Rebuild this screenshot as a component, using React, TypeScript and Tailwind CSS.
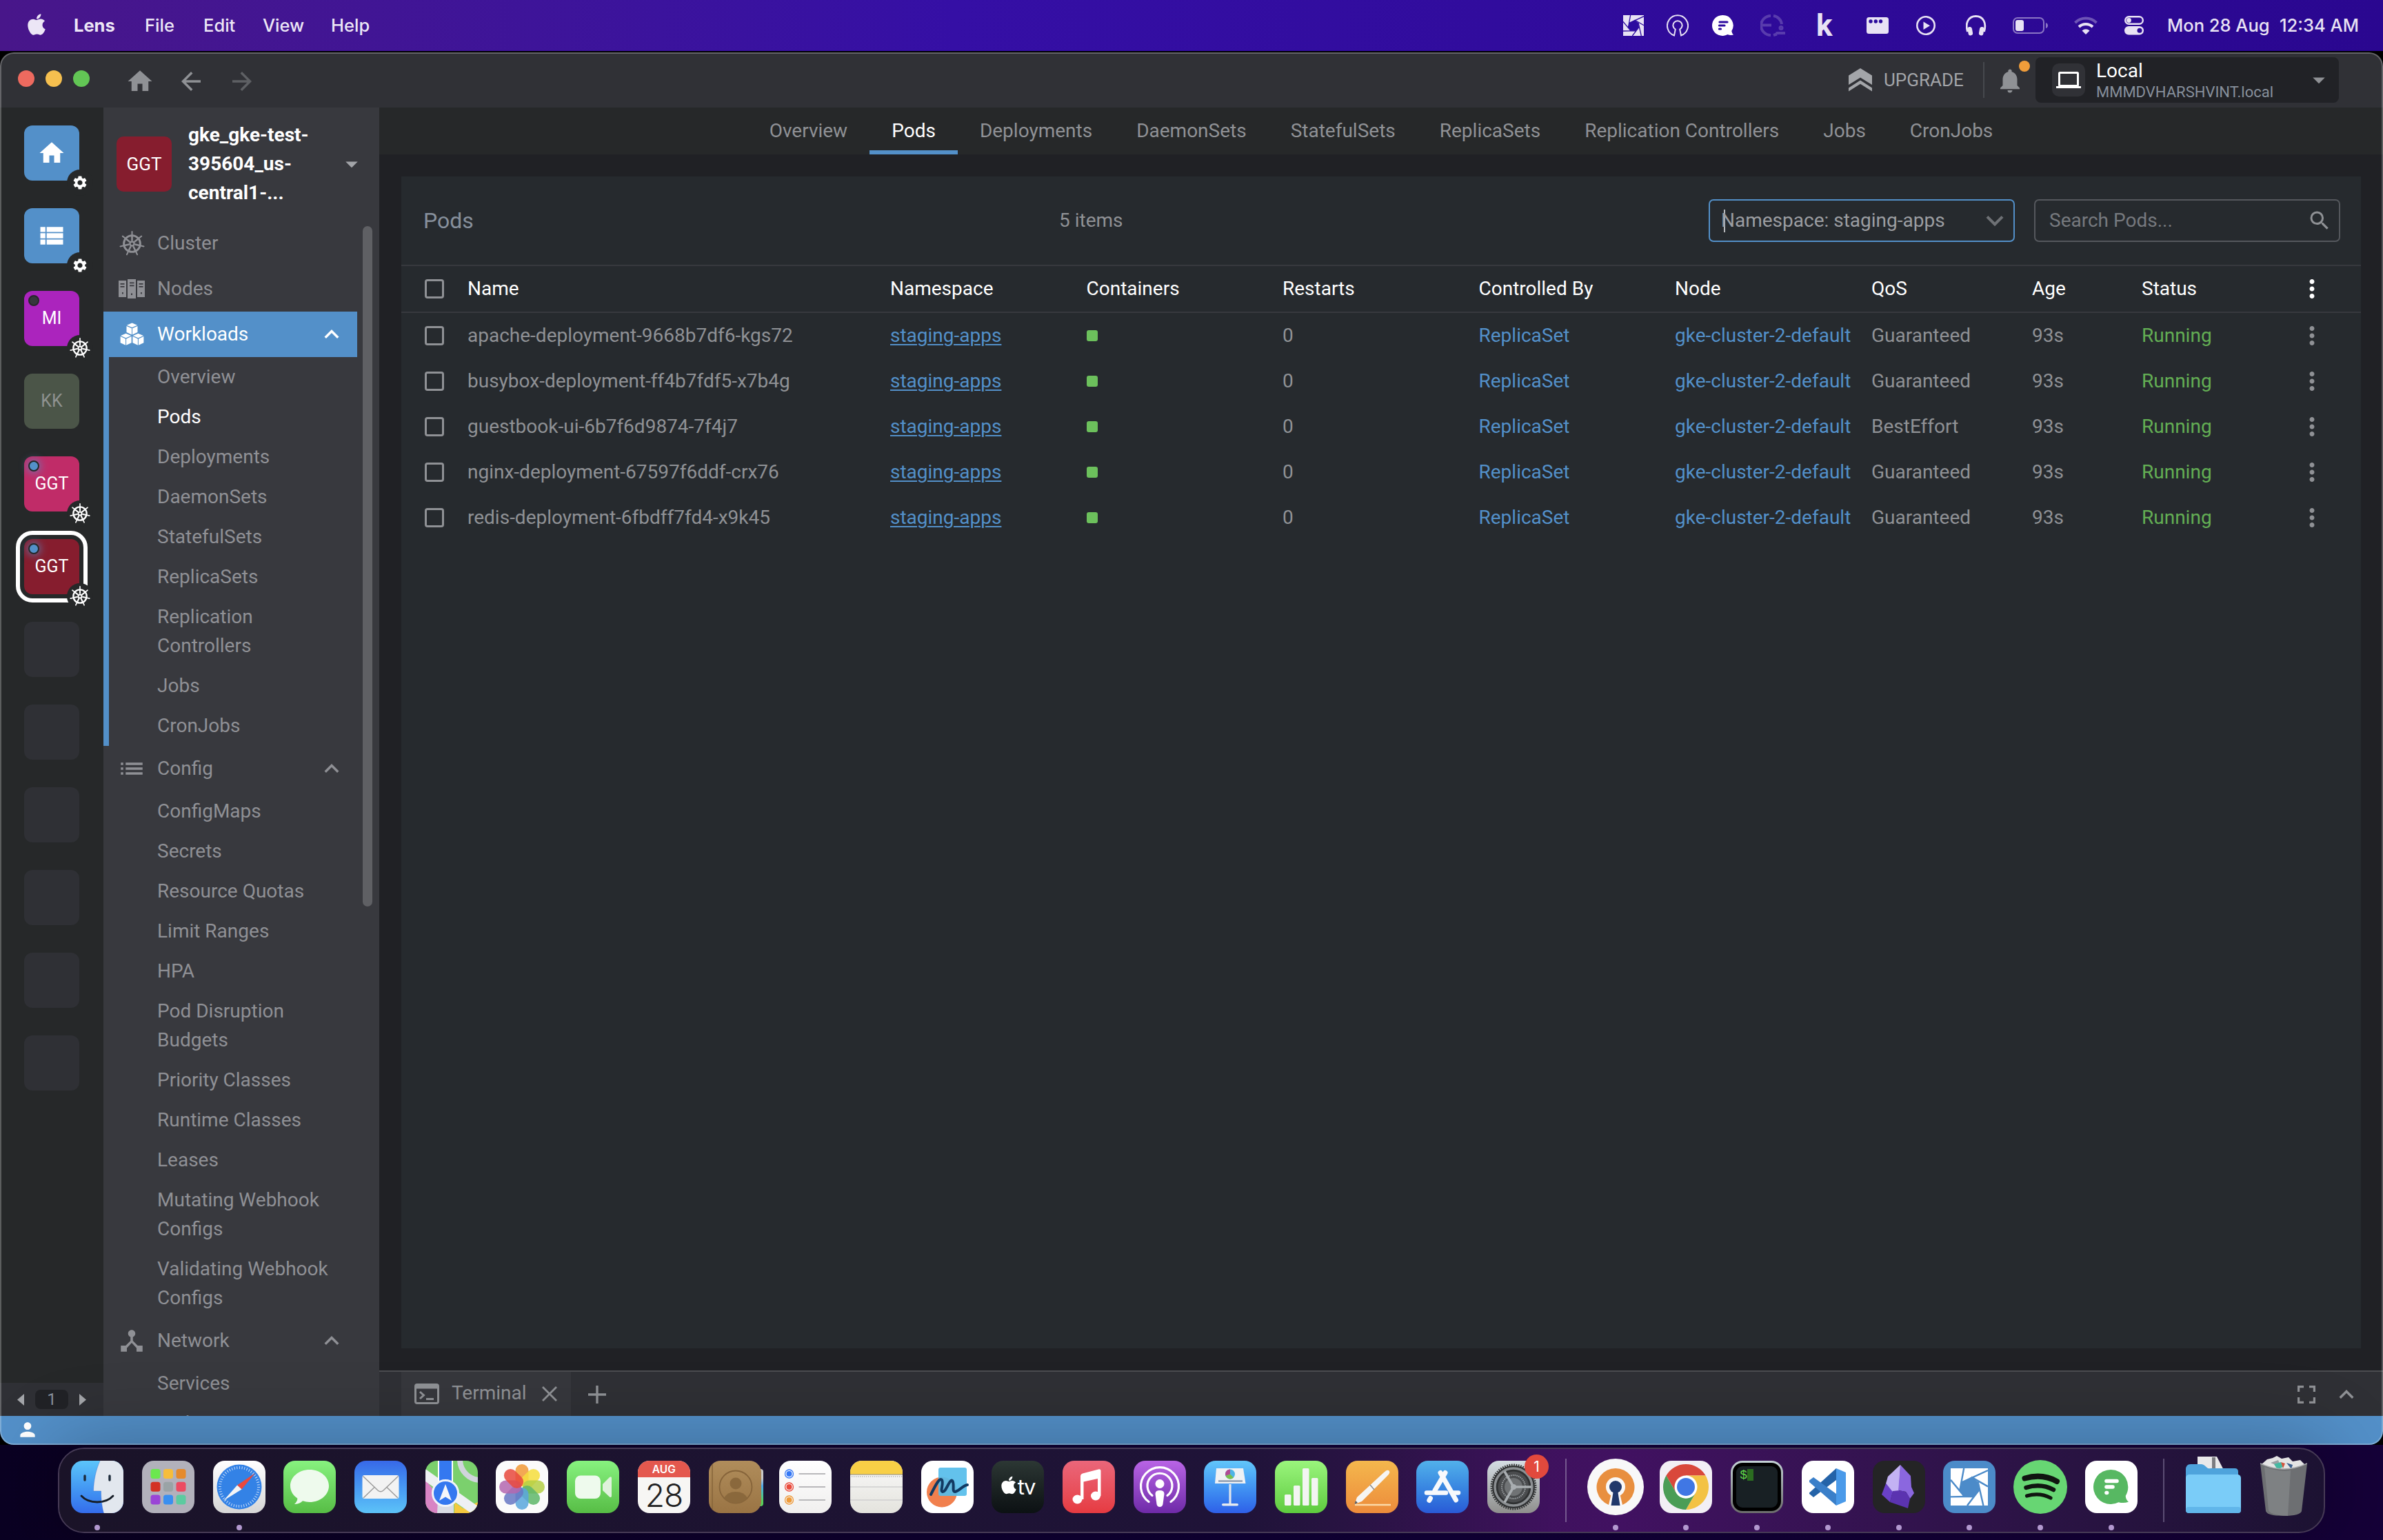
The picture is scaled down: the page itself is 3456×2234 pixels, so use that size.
import React from "react";
import {
  MdArrowBack,
  MdArrowDropDown,
  MdArrowForward,
  MdDeviceHub,
  MdHome,
  MdKeyboardArrowDown,
  MdKeyboardArrowUp,
  MdList,
  MdMoreVert,
  MdNotifications,
  MdPerson,
  MdSearch,
  MdSettings,
  MdViewList,
} from "react-icons/md";
import { FaApple } from "react-icons/fa";

/* ---------- shared marks ---------- */

function Helm({ size, className = "" }: { size: number; className?: string }) {
  const spokes = Array.from({ length: 7 }, (_, i) => {
    const a = (i * 2 * Math.PI) / 7 - Math.PI / 2;
    return { c: Math.cos(a), s: Math.sin(a) };
  });
  return (
    <svg width={size} height={size} viewBox="-18 -18 36 36" className={className} fill="none" stroke="currentColor">
      <circle r="11.6" strokeWidth="2.8" />
      {spokes.map((p, i) => (
        <g key={i}>
          <line x1={p.c * 4} y1={p.s * 4} x2={p.c * 11} y2={p.s * 11} strokeWidth="2.5" />
          <line x1={p.c * 12} y1={p.s * 12} x2={p.c * 17} y2={p.s * 17} strokeWidth="2" strokeLinecap="round" />
        </g>
      ))}
      <circle r="3" strokeWidth="2.4" />
    </svg>
  );
}

function Aperture({ size, cut }: { size: number; cut: string }) {
  return (
    <svg width={size} height={size} viewBox="0 0 90 90" stroke={cut} strokeWidth="4">
      <rect width="90" height="90" fill="currentColor" stroke="none" />
      <polygon points="27,34 50,21 66,33 69,52 56,68 33,68 22,54" fill={cut} stroke="none" />
      <path d="M22 54 32 0M27 34 90 5M50 21 90 44M66 33 79 90M69 52 40 90M56 68 0 69M33 68 0 28" fill="none" />
    </svg>
  );
}

function NodesIcon() {
  return (
    <svg width="38" height="28" viewBox="0 0 38 28" fill="currentColor">
      <path fillRule="evenodd" d="M0 2h11v24H0zM2.5 6v1.8h6V6zm0 4v1.8h6V10zM5 19v2.6h1.8V19z" />
      <path fillRule="evenodd" d="M13 0h12v28H13zM16 4.5v1.8h6.500V4.500zm0 4v1.800h6.500V8.500zM18 20.500v2.600h2v-2.600z" />
      <path fillRule="evenodd" d="M27 2h11v24H27zM29.500 6v1.800h6V6zm0 4v1.800h6V10zM32 19v2.600h1.800V19z" />
    </svg>
  );
}

function CubesIcon() {
  const cube = (x: number, y: number) => (
    <g transform={`translate(${x} ${y})`}>
      <path d="M8 0 15.600 3.200 8 6.600 .4 3.200z" />
      <path d="M0 4.400 7.500 7.700V17L0 13.600z" />
      <path d="M16 4.400 8.500 7.700V17L16 13.600z" />
    </g>
  );
  return (
    <svg width="35" height="34" viewBox="0 0 35 33" fill="currentColor">
      {cube(9.5, 0)}
      {cube(0.6, 15.2)}
      {cube(18.4, 15.2)}
    </svg>
  );
}

/* ---------- menu bar ---------- */

function MenuBar() {
  return (
    <header className="flex h-[74px] shrink-0 items-center bg-linear-to-r from-[#48168a] via-[#350fa5] via-40% to-[#2a0790] pr-[33px] pl-[40px] font-['Inter'] text-[25.500px] font-medium whitespace-pre text-[#ece6f6]">
      <FaApple className="-mt-[4px] mr-[41px] h-[35px] w-[26px]" />
      <div className="flex w-[103px]"><span className="font-bold">Lens</span></div>
      <div className="flex w-[85px]"><span>File</span></div>
      <div className="flex w-[86px]"><span>Edit</span></div>
      <div className="flex w-[99px]"><span>View</span></div>
      <div className="flex grow"><span>Help</span></div>
      <div className="flex items-center text-[#e8e2f4]">
        <div className="flex w-[63px]"><Aperture size={30} cut="#2c0b9f" /></div>
        <div className="flex w-[66px]">
          <svg width="32" height="32" viewBox="0 0 32 32" fill="none" stroke="currentColor" strokeWidth="2">
            <path d="M11 30.500 12.800 21.600A6.600 6.600 0 1 1 19.200 21.600L21 30.500A15 15 0 1 0 11 30.500z" />
          </svg>
        </div>
        <div className="flex w-[70px]">
          <svg width="32" height="32" viewBox="0 0 32 32">
            <path d="M15 1a15 15 0 1 0 7.500 28q4 1.500 8.500.5-2.500-2.500-2.700-5.500A15 15 0 0 0 15 1z" fill="#fff" />
            <path d="M11 11h11M10.500 16h7.500M10.500 21h2" stroke="#2c0b9f" strokeWidth="3.200" strokeLinecap="round" />
          </svg>
        </div>
        <div className="flex w-[82px] opacity-20">
          <svg width="36" height="34" viewBox="0 0 36 34" fill="none" stroke="#fff" strokeWidth="4">
            <path d="M15 3A14 14 0 0 0 15 31M19 3A14 14 0 0 1 31 15M1 16.500H16M19 31l5-1.500" />
            <circle cx="30" cy="20.500" r="2" strokeWidth="3" />
            <path d="M24 28h11" strokeLinecap="round" />
          </svg>
        </div>
        <div className="flex w-[72px]"><span className="-mt-[1px] -ml-[1px] font-['Roboto'] text-[44px] leading-[40px] font-bold">k</span></div>
        <div className="flex w-[72px]">
          <svg width="32" height="24" viewBox="0 0 32 24">
            <rect width="32" height="24" rx="3.500" fill="currentColor" />
            <g fill="#2b0a9c"><circle cx="6" cy="6" r="2.700" /><circle cx="13.300" cy="6" r="2.700" /><circle cx="20.500" cy="6" r="2.700" /></g>
          </svg>
        </div>
        <div className="flex w-[72px]">
          <svg width="28" height="28" viewBox="0 0 28 28">
            <circle cx="14" cy="14" r="12.700" fill="none" stroke="currentColor" strokeWidth="2.600" />
            <path d="M10.500 8.500v11.500l9.500-5.800z" fill="currentColor" />
          </svg>
        </div>
        <div className="flex w-[68px]">
          <svg width="30" height="30" viewBox="0 0 30 30" fill="currentColor">
            <path d="M2.500 24C-1.500 11 4 1.500 14.500 1.500S30.500 11 26.500 24" fill="none" stroke="currentColor" strokeWidth="2.800" />
            <rect x="3" y="17" width="6.500" height="12.500" rx="3" transform="rotate(-10 6 23)" />
            <rect x="19.500" y="17" width="6.500" height="12.500" rx="3" transform="rotate(10 23 23)" />
          </svg>
        </div>
        <div className="flex w-[89px]">
          <svg width="52" height="24" viewBox="0 0 52 24">
            <rect x="1" y="1" width="44" height="22" rx="6" fill="none" stroke="currentColor" strokeWidth="2" opacity=".5" />
            <rect x="4" y="4" width="12" height="16" rx="3" fill="currentColor" />
            <path d="M48 8q3 1 3 4t-3 4z" fill="currentColor" opacity=".5" />
          </svg>
        </div>
        <div className="flex w-[73px]">
          <svg width="34" height="26" viewBox="0 0 34 26" fill="none" stroke="currentColor" strokeWidth="4">
            <path d="M1.500 9a22 22 0 0 1 31 0" opacity=".35" />
            <path d="M7 15a14.500 14.500 0 0 1 20 0" />
            <path d="M11.500 20.500a8 8 0 0 1 11 0L17 26z" fill="currentColor" stroke="none" />
          </svg>
        </div>
        <div className="flex w-[62px]">
          <svg width="28" height="28" viewBox="0 0 28 28">
            <rect x="1.200" y="1.200" width="25.600" height="10.600" rx="5.300" fill="none" stroke="currentColor" strokeWidth="2.400" />
            <circle cx="6.500" cy="6.500" r="3.400" fill="currentColor" />
            <rect y="15" width="28" height="12.500" rx="6.200" fill="currentColor" />
            <circle cx="22" cy="21.200" r="3.500" fill="#2a0896" />
          </svg>
        </div>
        <span className="w-[163px] whitespace-nowrap">Mon 28 Aug</span>
        <span className="w-[117px] whitespace-nowrap">12:34 AM</span>
      </div>
    </header>
  );
}

/* ---------- window title bar ---------- */

function TitleBar() {
  return (
    <div className="flex h-[80px] shrink-0 items-center bg-[#303136] pr-[64px] pl-[26px] text-[#8f9195]">
      <div className="-mt-[4px] flex w-[156px] gap-[16px]">
        <span className="size-[24px] rounded-full bg-[#ed6a5f]" />
        <span className="size-[24px] rounded-full bg-[#f5bf4f]" />
        <span className="size-[24px] rounded-full bg-[#62c655]" />
      </div>
      <div className="mt-[3px] flex grow items-center">
        <MdHome className="size-[42px]" />
        <MdArrowBack className="ml-[32px] size-[42px]" />
        <MdArrowForward className="ml-[32px] size-[42px] text-[#5e6064]" />
      </div>
      <svg width="34" height="34" viewBox="0 0 34 34" fill="#a3a5a9">
        <path d="M17 0 34 10.500V24L17 13.500 0 24V10.500z" />
        <path d="M17 17.500 34 28.500V33.500L17 22.800 0 33.500V28.500z" />
      </svg>
      <span className="ml-[17px] w-[144px] text-[26px] text-[#a3a5a9]">UPGRADE</span>
      <div className="h-[52px] w-[2px] bg-[#46484d]" />
      <div className="relative mt-[2px] mr-[16px] ml-[16px] flex">
        <MdNotifications className="size-[42px]" />
        <span className="absolute top-[-8px] left-[34px] size-[16px] rounded-full bg-[#f09d3a]" />
      </div>
      <div className="flex h-[66px] w-[440px] items-center rounded-[8px] bg-[#212226] pr-[8px] pl-[24px]">
        <div className="flex size-[48px] items-center justify-center rounded-[10px] bg-[#303136]">
          <svg width="36" height="26" viewBox="0 0 36 26">
            <rect x="4.500" y="2.500" width="27" height="19" rx="1" fill="none" stroke="#fff" strokeWidth="3" />
            <rect y="22" width="36" height="3" fill="#fff" />
          </svg>
        </div>
        <div className="ml-[16px] grow">
          <div className="mt-[2px] text-[28px] leading-[34px] text-white">Local</div>
          <div className="text-[22px] leading-[28px] text-[#87909c]">MMMDVHARSHVINT.local</div>
        </div>
        <MdArrowDropDown className="size-[42px]" />
      </div>
    </div>
  );
}

/* ---------- hotbar ---------- */

type Hot = {
  bg: string;
  label?: React.ReactNode;
  badge?: "gear" | "helm";
  dot?: string;
  active?: boolean;
};

const hotItems: Hot[] = [
  { bg: "bg-[#5390c9]", label: <MdHome className="size-[42px]" />, badge: "gear" },
  { bg: "bg-[#5390c9]", label: <MdViewList className="size-[44px]" />, badge: "gear" },
  { bg: "bg-[#ab24bd]", label: "MI", badge: "helm", dot: "bg-[#36373b]" },
  { bg: "bg-[#4b5548]", label: <span className="text-[#8e9290]">KK</span> },
  { bg: "bg-[#c02c68]", label: "GGT", badge: "helm", dot: "bg-[#5390c9] shadow-[0_0_12px_2px_#5390c9aa]" },
  { bg: "bg-[#861d2e]", label: "GGT", badge: "helm", dot: "bg-[#5390c9] shadow-[0_0_12px_2px_#5390c9aa]", active: true },
  ...Array.from({ length: 6 }, () => ({ bg: "bg-[#2f3035]" })),
];

function Hotbar() {
  return (
    <div className="flex w-[150px] shrink-0 flex-col bg-[#262829]">
      <div className="flex grow flex-col gap-[40px] pt-[26px] pl-[35px]">
        {hotItems.map((h, i) => (
          <div key={i} className={`relative flex size-[80px] items-center justify-center rounded-[12px] text-[25px] text-white ${h.bg}`}>
            {h.active && <span className="absolute -inset-[12px] rounded-[24px] border-[6px] border-white" />}
            {h.label}
            {h.dot && <span className={`absolute top-[6px] left-[6px] size-[16px] rounded-full border-2 border-[#262829] ${h.dot}`} />}
            {h.badge && (
              <span className="absolute top-[64px] left-[62px] flex size-[38px] items-center justify-center rounded-full bg-[#262829]">
                {h.badge === "gear" ? <MdSettings className="size-[24px]" /> : <Helm size={30} />}
              </span>
            )}
          </div>
        ))}
      </div>
      <div className="flex h-[48px] shrink-0 items-center bg-[#2f3035] pl-[25px] text-[#a3a5a9]">
        <svg width="10" height="17" viewBox="0 0 10 17" fill="currentColor"><path d="M10 0v17L0 8.500z" /></svg>
        <span className="mx-[16px] flex h-[28px] w-[48px] items-center justify-center rounded-[8px] bg-[#212226] text-[24px] text-[#87909c]">1</span>
        <svg width="10" height="17" viewBox="0 0 10 17" fill="currentColor"><path d="M0 0v17L10 8.500z" /></svg>
      </div>
    </div>
  );
}

/* ---------- sidebar ---------- */

const workloads = ["Overview", "Pods", "Deployments", "DaemonSets", "StatefulSets", "ReplicaSets", "Replication Controllers", "Jobs", "CronJobs"];
const config = [
  "ConfigMaps",
  "Secrets",
  "Resource Quotas",
  "Limit Ranges",
  "HPA",
  "Pod Disruption Budgets",
  "Priority Classes",
  "Runtime Classes",
  "Leases",
  "Mutating Webhook Configs",
  "Validating Webhook Configs",
];
const network = ["Services", "Endpoints"];

function Section({ icon, label, open, active }: { icon: React.ReactNode; label: string; open?: boolean; active?: boolean }) {
  return (
    <div className={`flex h-[66px] w-[368px] items-center pr-[16px] pl-[20px] ${active ? "bg-[#5390c9] text-white" : ""}`}>
      <span className="flex w-[42px] justify-center">{icon}</span>
      <span className="ml-[16px] grow">{label}</span>
      {open && <MdKeyboardArrowUp className="size-[42px]" />}
    </div>
  );
}

function SubList({ items, current, active }: { items: string[]; current?: string; active?: boolean }) {
  return (
    <div className={`border-l-8 ${active ? "border-[#5390c9]" : "border-transparent"}`}>
      {items.map((t) => (
        <div key={t} className={`w-[350px] py-[8px] pr-[20px] pl-[70px] leading-[42px] ${t === current ? "text-white" : ""}`}>{t}</div>
      ))}
    </div>
  );
}

function Sidebar() {
  return (
    <div className="flex w-[400px] shrink-0 flex-col bg-[#38393e] text-[28px] text-[#8f9095]">
      <div className="flex h-[164px] shrink-0 items-center pr-[19px] pl-[19px]">
        <span className="flex size-[80px] shrink-0 items-center justify-center rounded-[10px] bg-[#861d2e] text-[26px] text-white">GGT</span>
        <span className="ml-[24px] grow leading-[42px] font-bold text-white">
          gke_gke-test-
          <br />
          395604_us-
          <br />
          central1-...
        </span>
        <MdArrowDropDown className="size-[42px] shrink-0 text-[#a3a5a9]" />
      </div>
      <div className="relative h-[1734px] overflow-hidden">
        <Section icon={<Helm size={37} className="shrink-0" />} label="Cluster" />
        <Section icon={<NodesIcon />} label="Nodes" />
        <Section icon={<CubesIcon />} label="Workloads" open active />
        <SubList items={workloads} current="Pods" active />
        <Section icon={<MdList className="size-[42px]" />} label="Config" open />
        <SubList items={config} />
        <Section icon={<MdDeviceHub className="size-[42px]" />} label="Network" open />
        <SubList items={network} />
        <span className="absolute top-[8px] right-[10px] h-[987px] w-[14px] rounded-full bg-[#5f6064]" />
      </div>
    </div>
  );
}

/* ---------- pods view ---------- */

const tabs = ["Overview", "Pods", "Deployments", "DaemonSets", "StatefulSets", "ReplicaSets", "Replication Controllers", "Jobs", "CronJobs"];

const pods = [
  ["apache-deployment-9668b7df6-kgs72", "Guaranteed"],
  ["busybox-deployment-ff4b7fdf5-x7b4g", "Guaranteed"],
  ["guestbook-ui-6b7f6d9874-7f4j7", "BestEffort"],
  ["nginx-deployment-67597f6ddf-crx76", "Guaranteed"],
  ["redis-deployment-6fbdff7fd4-x9k45", "Guaranteed"],
];

const rowGrid =
  "grid h-[66px] grid-cols-[62px_613px_284.500px_284.500px_284.500px_284.500px_285px_233px_159px_226px_1fr] items-center pl-[34px]";

function Box() {
  return <span className="size-[28px] rounded-[4px] border-[3px] border-[#8f9195]" />;
}

function Pods() {
  return (
    <div className="flex grow flex-col bg-[#202125] px-[32px] pt-[32px] pb-[32px]">
      <div className="h-[1700px] bg-[#262a2e]">
        <div className="flex h-[128px] items-center pr-[30px] pl-[32px]">
          <span className="w-[922px] text-[32px] text-[#87909c]">Pods</span>
          <span className="grow text-[#8f9195]">5 items</span>
          <div className="flex h-[62px] w-[444px] items-center rounded-[7px] border-2 border-[#5390c9] pl-[20px] text-[#9b9da1]">
            <span className="h-[33px] w-[2px] bg-[#b5b7ba]" />
            <span className="-ml-[6px] grow">Namespace: staging-apps</span>
            <MdKeyboardArrowDown className="mr-[2px] size-[50px] text-[#6e7175]" />
          </div>
          <div className="ml-[28px] flex h-[62px] w-[444px] items-center rounded-[7px] border-2 border-[#55585d] pr-[10px] pl-[20px]">
            <span className="grow text-[#76797e]">Search Pods...</span>
            <MdSearch className="size-[36px] text-[#8f9195]" />
          </div>
        </div>
        <div className={`${rowGrid} box-content border-y-2 border-[#37393e] text-white`}>
          <Box />
          <span>Name</span>
          <span>Namespace</span>
          <span>Containers</span>
          <span>Restarts</span>
          <span>Controlled By</span>
          <span>Node</span>
          <span>QoS</span>
          <span>Age</span>
          <span>Status</span>
          <MdMoreVert className="size-[42px]" />
        </div>
        {pods.map(([name, qos]) => (
          <div key={name} className={rowGrid}>
            <Box />
            <span>{name}</span>
            <span className="text-[#5390c9] underline decoration-2 underline-offset-[3px]">staging-apps</span>
            <span className="size-[16px] rounded-[3px] bg-[#6cc05c]" />
            <span>0</span>
            <span className="text-[#5390c9]">ReplicaSet</span>
            <span className="whitespace-nowrap text-[#5390c9]">gke-cluster-2-default</span>
            <span>{qos}</span>
            <span>93s</span>
            <span className="text-[#63ae54]">Running</span>
            <MdMoreVert className="size-[42px]" />
          </div>
        ))}
      </div>
    </div>
  );
}

function Main() {
  return (
    <div className="flex w-[2906px] shrink-0 flex-col text-[28px] text-[#8f9195]">
      <div className="flex h-[68px] shrink-0 justify-center bg-[#262829]">
        {tabs.map((t) => (
          <div key={t} className={`flex items-center px-[32px] pt-[6px] ${t === "Pods" ? "border-b-[6px] border-[#5390c9] text-white" : "pb-[6px]"}`}>
            {t}
          </div>
        ))}
      </div>
      <Pods />
      <div className="flex h-[66px] shrink-0 items-stretch border-t-2 border-[#4b4c50] bg-[#2f3035] pl-[32px]">
        <div className="flex w-[246px] items-center bg-[#36373c] pl-[19px]">
          <svg width="36" height="30" viewBox="0 0 36 30" fill="none" stroke="currentColor" strokeWidth="3">
            <rect x="1.500" y="1.500" width="33" height="27" rx="2.500" />
            <path d="M1 5H35" strokeWidth="5" />
            <path d="M8 12l5.500 5L8 22M17 22.500h11" />
          </svg>
          <span className="-mt-[3px] ml-[18px] w-[131px]">Terminal</span>
          <svg width="22" height="22" viewBox="0 0 22 22" stroke="currentColor" strokeWidth="2.800"><path d="M1 1 21 21M21 1 1 21" /></svg>
        </div>
        <div className="flex grow items-center pt-[2px] pl-[25px]">
          <svg width="26" height="26" viewBox="0 0 26 26" stroke="currentColor" strokeWidth="3.400"><path d="M13 0V26M0 13H26" /></svg>
        </div>
        <div className="flex items-center pt-[2px] pr-[32px]">
          <svg width="26" height="26" viewBox="0 0 26 26" fill="none" stroke="currentColor" strokeWidth="3.200"><path d="M9 1.600H1.600V9M17 1.600H24.400V9M9 24.400H1.600V17M17 24.400H24.400V17" /></svg>
          <MdKeyboardArrowUp className="ml-[24px] size-[42px]" />
        </div>
      </div>
    </div>
  );
}

/* ---------- dock ---------- */

function Tile({ className = "", children }: { className?: string; children?: React.ReactNode }) {
  return <div className={`relative flex size-[76px] items-center justify-center overflow-hidden rounded-[17px] ${className}`}>{children}</div>;
}

function Art({ children }: { children: React.ReactNode }) {
  return (
    <svg width="76" height="76" viewBox="0 0 76 76" fill="none" className="absolute inset-0">
      {children}
    </svg>
  );
}

function Finder() {
  return (
    <Tile className="bg-linear-to-b from-[#5cc5fa] to-[#356ceb]">
      <Art>
        <path d="M42 0C36 14 33 28 32.500 44H43.500C43.500 56 45 68 47.500 76H76V0z" fill="#e2e7ee" />
        <path d="M20 22v6M56 22v6" stroke="#1c2a3a" strokeWidth="3.400" strokeLinecap="round" />
        <path d="M15 51C26 63 50 63 61 51" stroke="#161d26" strokeWidth="2.800" strokeLinecap="round" />
        <path d="M42 0C36 14 33 28 32.500 44H43.500C43.500 56 45 68 47.500 76" stroke="#2b62c8" strokeOpacity=".35" strokeWidth="1" />
      </Art>
    </Tile>
  );
}

function Launchpad() {
  const colors = ["#6be84e", "#f6bd3b", "#e58a2c", "#d33124", "#9aa3a6", "#ec4b62", "#9a45d6", "#3a8ff0", "#5ccba0"];
  return (
    <Tile className="bg-[#b2b1bb]">
      <Art>
        {colors.map((c, i) => (
          <rect key={c} x={12.500 + (i % 3) * 18.500} y={12 + Math.floor(i / 3) * 18.800} width="14" height="14" rx="3.500" fill={c} />
        ))}
      </Art>
    </Tile>
  );
}

function Safari() {
  return (
    <Tile className="bg-linear-to-b from-white to-[#d6d6d6]">
      <Art>
        <circle cx="38" cy="38" r="32.500" fill="#3382e6" />
        <circle cx="38" cy="38" r="28" stroke="#fff" strokeOpacity=".8" strokeWidth="4" strokeDasharray="0.9 2.760" />
        <path d="M61 18 41.500 41.500 35 35.500z" fill="#e9493d" />
        <path d="M15 58 41.500 41.500 35 35.500z" fill="#f3f4f6" />
      </Art>
    </Tile>
  );
}

function Messages() {
  return (
    <Tile className="bg-linear-to-b from-[#87f27f] to-[#57bd45]">
      <Art>
        <path d="M38 13c-15.500 0-28 10.500-28 23.500 0 7.500 4 13.700 10.300 18 .2 3-1.300 5.800-4.300 8.500 5.500.2 9.500-2 12-4.700A33 33 0 0 0 38 60c15.500 0 28-10.500 28-23.500S53.500 13 38 13z" fill="#eefaed" />
      </Art>
    </Tile>
  );
}

function Mail() {
  return (
    <Tile className="bg-linear-to-b from-[#3868e8] to-[#5dc3f8]">
      <Art>
        <rect x="11.500" y="21" width="53" height="34" rx="3" fill="#f3f3f3" />
        <path d="M12.500 22.500 34 43q4 3.500 8 0L63.500 22.500M13 54 29 38.500M63 54 47 38.500" stroke="#9b9b9b" strokeWidth="1.500" />
      </Art>
    </Tile>
  );
}

function Maps() {
  return (
    <Tile className="bg-[#7bd06d]">
      <Art>
        <path d="M0 28 40 76H0z" fill="#d884c4" />
        <path d="M40 76 76 60V76z" fill="#f4c93f" />
        <path d="M0 12 76 66V76H66L0 30z" fill="#eef0f3" />
        <path d="M19 38H41V76H17z" fill="#d9dce4" />
        <path d="M42 60l22 16H42z" fill="#f4c93f" />
        <rect x="19" y="-2" width="20" height="42" fill="#3478f0" stroke="#fff" strokeWidth="2" />
        <circle cx="80" cy="-2" r="30" stroke="#d0d4dc" strokeWidth="8" />
        <circle cx="29" cy="47" r="18.500" fill="#3478f0" stroke="#f0f3f8" strokeWidth="3" />
        <path d="M29 34 38 58 29 52.500 20 58z" fill="#f5f7fa" />
      </Art>
    </Tile>
  );
}

function Photos() {
  const petals = ["#f19a38", "#f4dd3e", "#b4cf46", "#5fb76a", "#5aa6dc", "#6878c4", "#b368b0", "#e8493e"];
  return (
    <Tile className="bg-[#fbfbfb]">
      <Art>
        {petals.map((c, i) => (
          <rect key={c} x="28.500" y="5" width="19" height="32" rx="9.500" fill={c} fillOpacity=".86" transform={`rotate(${i * 45} 38 38)`} />
        ))}
      </Art>
    </Tile>
  );
}

function FaceTime() {
  return (
    <Tile className="bg-linear-to-b from-[#87f27f] to-[#57bd45]">
      <Art>
        <rect x="12" y="21.500" width="37" height="33.500" rx="8" fill="#eefaed" />
        <path d="M52 34 62 24q3-2 3 1.500V51q0 3-3 1.500L52 43z" fill="#dff2dc" />
      </Art>
    </Tile>
  );
}

function Calendar() {
  return (
    <Tile className="flex-col bg-[#f7f6f4]">
      <span className="flex h-[24px] w-full items-center justify-center bg-[#e4584e] pt-[2px] font-['Inter'] text-[15.500px] font-semibold text-white">AUG</span>
      <span className="flex h-[52px] items-center font-['Inter'] text-[46px] font-light tracking-tight text-[#222]">28</span>
    </Tile>
  );
}

function Contacts() {
  return (
    <div className="relative flex">
      <span className="absolute top-[12px] -right-[3px] h-[54px] w-[16px] rounded-r-[4px] bg-linear-to-b from-[#c9c9c9] from-25% via-[#4fa9ec] via-45% to-[#57cf5b] to-85%" />
      <Tile className="bg-linear-to-b from-[#b08d5b] to-[#9a7444]">
        <Art>
          <path d="M5 0V76" stroke="#86643a" strokeWidth="1.500" />
          <circle cx="39" cy="38" r="23.500" stroke="#86643a" strokeWidth="1.800" />
          <circle cx="39" cy="33" r="8.500" fill="#8a683c" />
          <path d="M22 54q5-9 17-9t17 9q-7 7.500-17 7.500T22 54z" fill="#8a683c" />
        </Art>
      </Tile>
    </div>
  );
}

function Reminders() {
  return (
    <Tile className="bg-linear-to-b from-white to-[#f0efee]">
      <Art>
        {["#3478f6", "#ea4b3c", "#ef9a38"].map((c, i) => (
          <g key={c}>
            <circle cx="14.500" cy={19 + i * 19} r="6" stroke={c} strokeWidth="1.300" />
            <circle cx="14.500" cy={19 + i * 19} r="4" fill={c} />
            <path d={`M28.500 ${19 + i * 19}H67`} stroke="#b9b9bb" strokeWidth="2" />
          </g>
        ))}
      </Art>
    </Tile>
  );
}

function Notes() {
  return (
    <Tile className="bg-linear-to-b from-[#fafafa] to-[#e4e3dd]">
      <Art>
        <rect width="76" height="20" fill="#f8cf46" />
        <path d="M0 20H76" stroke="#8e8a7c" strokeWidth="1.200" />
        <path d="M2 23H76" stroke="#b4b4b2" strokeWidth="1.500" strokeDasharray="1.300 1.700" />
        <path d="M0 38H76M0 57H76" stroke="#cfcfcf" strokeWidth="1.700" />
      </Art>
    </Tile>
  );
}

function Freeform() {
  return (
    <Tile className="bg-white">
      <Art>
        <circle cx="30" cy="45.500" r="22" fill="#f1804e" />
        <rect x="25" y="10" width="41" height="41" rx="3" fill="#56bdea" fillOpacity=".92" />
        <path d="M14 49C22 33 27 24 30 28 33 33 27 44 31 45 36 46 41 26 45 29 49 33 44 45 49 45 55 44 60 36 67 35" stroke="#123a63" strokeWidth="4" strokeLinecap="round" />
      </Art>
    </Tile>
  );
}

function AppleTv() {
  return (
    <Tile className="bg-linear-to-b from-[#2c3734] to-[#0c1113] text-white">
      <FaApple className="-mt-[5px] h-[29px] w-[22px]" />
      <span className="ml-[2px] font-['Inter'] text-[31px] leading-[40px] tracking-tighter">tv</span>
    </Tile>
  );
}

function Music() {
  return (
    <Tile className="bg-linear-to-b from-[#ea667a] to-[#e63a41]">
      <Art>
        <ellipse cx="21.500" cy="56" rx="7" ry="6.500" fill="#fff" />
        <ellipse cx="48" cy="51" rx="7" ry="6.500" fill="#fff" />
        <path d="M26 56V22.500q0-3 3-4L52 12.500q3.500-.7 3.500 2.500V51H51V26L30.500 30.500V56z" fill="#fff" />
      </Art>
    </Tile>
  );
}

function Podcasts() {
  return (
    <Tile className="bg-linear-to-b from-[#b964e6] to-[#6f2aa8]">
      <Art>
        <path d="M22 59.500A27.500 27.500 0 1 1 54 59.500M27 50.500A18 18 0 1 1 49 50.500" stroke="#fff" strokeWidth="3.200" strokeLinecap="round" />
        <circle cx="38" cy="33.500" r="6.500" fill="#fff" />
        <path d="M31.500 48q0-5 6.500-5t6.500 5L42.500 63q-.8 4-4.500 4t-4.500-4z" fill="#fff" />
      </Art>
    </Tile>
  );
}

function Keynote() {
  return (
    <Tile className="bg-linear-to-b from-[#62c6fa] to-[#2f5fe8]">
      <Art>
        <path d="M18 11H57L60.500 33H16z" fill="#eff1f4" />
        <path d="M21 29.500H56" stroke="#7b8ba0" strokeWidth="1.800" />
        <circle cx="38" cy="19.500" r="7" fill="#4fb5e6" />
        <path d="M38 19.500V12.500A7 7 0 0 0 31.500 22z" fill="#b14a93" />
        <path d="M38 19.500 31.500 22A7 7 0 0 0 43 24.500z" fill="#7ac04f" />
        <path d="M38 34V63" stroke="#dfe4ec" strokeWidth="3.200" />
        <rect x="26" y="62" width="24" height="3.600" rx="1.800" fill="#e5e9ef" />
      </Art>
    </Tile>
  );
}

function Numbers() {
  return (
    <Tile className="bg-linear-to-b from-[#9af57c] to-[#5ecb3e]">
      <Art>
        <g fill="#f3f5f2">
          <rect x="14" y="49" width="9.500" height="16" rx="1.500" />
          <rect x="27" y="36" width="9.500" height="29" rx="1.500" />
          <rect x="40" y="11" width="9.500" height="54" rx="1.500" />
          <rect x="53" y="25" width="9.500" height="40" rx="1.500" />
        </g>
      </Art>
    </Tile>
  );
}

function PagesApp() {
  return (
    <Tile className="bg-linear-to-b from-[#f4b74d] to-[#ec8b3b]">
      <Art>
        <path d="M13 64H65" stroke="#fbd9a8" strokeWidth="2.600" />
        <path d="M12.500 63 16 53 55 17Q60 12 62.500 14.500T60 22L23 59z" fill="#f6f5f3" />
        <path d="M35 35 41 42" stroke="#8e8e90" strokeWidth="1.600" />
        <path d="M12.500 63 14 58 17 61z" fill="#55565a" />
      </Art>
    </Tile>
  );
}

function AppStore() {
  return (
    <Tile className="bg-linear-to-b from-[#52b1ea] to-[#2a5ad6]">
      <Art>
        <g stroke="#f7f9fc" strokeWidth="7" strokeLinecap="round">
          <path d="M42 17.500 27 43M35 17.500 57.500 57M20.500 54.500 18.800 57.500" />
          <path d="M15 46.500H43M53 46.500H61" strokeWidth="6.500" />
        </g>
      </Art>
    </Tile>
  );
}

function SystemSettings() {
  return (
    <div className="relative flex">
      <Tile className="bg-linear-to-b from-[#d5dee4] to-[#8f8f8d]">
        <Art>
          <circle cx="38" cy="38" r="31" fill="#2f3132" />
          <circle cx="38" cy="38" r="32" stroke="#2f3132" strokeWidth="3" strokeDasharray="1.700 1.650" />
          <circle cx="38" cy="38" r="27" stroke="#8b8f92" strokeWidth="3.500" />
          <circle cx="38" cy="38" r="22.500" fill="#4a4c4e" />
          <circle cx="38" cy="38" r="17" stroke="#9ea3a6" strokeWidth="2" strokeDasharray="1.500 1.300" />
          <circle cx="38" cy="38" r="13" fill="#707375" />
          <path d="M38 38H64M38 38 25 15.500M38 38 25 60.500" stroke="#a9aeb1" strokeWidth="3.500" />
          <circle cx="38" cy="38" r="4" fill="#a9aeb1" />
        </Art>
      </Tile>
      <span className="absolute -top-[9px] left-[54px] flex size-[35px] items-center justify-center rounded-full bg-[#e2493d] font-['Inter'] text-[21px] text-white">1</span>
    </div>
  );
}

function OpenVpn() {
  return (
    <svg width="82" height="82" viewBox="0 0 82 82">
      <circle cx="41" cy="41" r="41" fill="#f8f8f8" />
      <path d="M31 67A27.500 27.500 0 1 1 51 67L47 50A11.500 11.500 0 1 0 35 50z" fill="#e88f3f" />
      <circle cx="41" cy="41" r="14" fill="#f8f8f8" />
      <path d="M36 46 32 68H50L46 46z" fill="#f8f8f8" />
      <circle cx="41" cy="41" r="9" fill="#20386b" />
      <path d="M38 46 34.500 68H47.500L44 46z" fill="#20386b" />
    </svg>
  );
}

function Chrome() {
  return (
    <Tile className="bg-[#f2eff5]">
      <Art>
        <path d="M9.400 21.500A33 33 0 0 1 66.600 21.500L38 21.500 23.700 46.200z" fill="#d9483b" />
        <path d="M66.600 21.500A33 33 0 0 1 38 71L52.300 46.300 38 21.500z" fill="#f3c244" />
        <path d="M38 71A33 33 0 0 1 9.400 21.500L23.700 46.200A16.500 16.500 0 0 0 52.300 46.300z" fill="#4a9d56" />
        <circle cx="38" cy="38" r="16.500" fill="#fff" />
        <circle cx="38" cy="38" r="13" fill="#4077e4" />
      </Art>
    </Tile>
  );
}

function Term() {
  return (
    <Tile className="bg-linear-to-b from-[#c5d3d7] to-[#6d6d6d]">
      <div className="absolute inset-[3px] flex items-start rounded-[14px] border-[5px] border-black bg-[#182024] pt-[4px] pl-[5px]">
        <span className="font-['Liberation_Mono'] text-[18px] leading-[18px] text-[#5fd846]">$</span>
        <span className="h-[17px] w-[9px] bg-[#2b6d20]" />
      </div>
    </Tile>
  );
}

function VsCode() {
  return (
    <Tile className="bg-white">
      <Art>
        <path d="M50 11 64 17V59L50 65z" fill="#4a9ae9" />
        <path d="M50 11V28L17 53 11 48V46.500z" fill="#2463a8" />
        <path d="M50 65V48L17 24 11 28.500V31z" fill="#3a7fc9" />
      </Art>
    </Tile>
  );
}

function Obsidian() {
  return (
    <Tile className="bg-[#242425]">
      <Art>
        <path d="M40 6 22 23 19 33 29 47 38 44z" fill="#b9a5ef" />
        <path d="M40 6 55 22 56 38 60 47 54 55 48 45 37 43z" fill="#8b67df" />
        <path d="M19 33 29 45 25 60 13 49z" fill="#6a41c8" />
        <path d="M29 44Q42 42 49 46L54 55 51 69 25 60z" fill="#5b33b0" />
        <path d="M40 6 37 43 28 44 20 33 22 23z" fill="#c9baf5" fillOpacity=".6" />
      </Art>
    </Tile>
  );
}

function Spotify() {
  return (
    <svg width="78" height="78" viewBox="0 0 78 78" fill="none" stroke="#101510" strokeLinecap="round">
      <circle cx="39" cy="39" r="39" fill="#67d673" stroke="none" />
      <path d="M16.500 26.500Q42 19 63 31" strokeWidth="8" />
      <path d="M18.500 40Q40 33.500 58 43" strokeWidth="6.500" />
      <path d="M19.500 52Q38 46.500 54 55" strokeWidth="5.200" />
    </svg>
  );
}

function Chat() {
  return (
    <Tile className="bg-white">
      <Art>
        <path d="M37 13a25 25 0 1 0 11.500 47.200q7 2 14.500-.4-4-3.500-4.300-8.800A25 25 0 0 0 37 13z" fill="#57b862" />
        <path d="M31 29.500H46M31 38H40M31 46.500H31.600" stroke="#fff" strokeWidth="5.600" strokeLinecap="round" />
      </Art>
    </Tile>
  );
}

function Folder() {
  return (
    <svg width="80" height="84" viewBox="0 0 80 84">
      <path d="M17 1H45L62 34H17z" fill="#e9e9ea" />
      <path d="M38 2h5v16h-5z" fill="#7b7c80" />
      <path d="M0 20q0-8 7-8H22q4 0 7 3.500T36 18H71q5 0 5 5V38H0z" fill="#4ea3dc" />
      <rect y="27" width="80" height="56" rx="5" fill="#7accf8" />
      <rect y="74" width="80" height="9" rx="4" fill="#61b6ea" />
    </svg>
  );
}

function Trash() {
  return (
    <svg width="68" height="88" viewBox="0 0 68 88">
      <path d="M2 12 10 5 18 3 24 0 31 4 41 2 47 8 58 6 66 14 60 20H8z" fill="#e4e4e4" />
      <path d="M15 10 26 6 30 16z" fill="#9aa0a3" />
      <path d="M20 12l10-3 3 7-8 4z" fill="#45b9a2" />
      <path d="M38 10l9 3-2 6z" fill="#3b5f8e" />
      <path d="M30 9l6 2-3 7z" fill="#d2543e" />
      <path d="M0 11Q34 27 68 11L60 80Q58 87 34 87T8 80z" fill="#6d6f72" />
      <path d="M6 16Q30 24 44 21L40 87Q14 86 12 79z" fill="#8d8f92" fillOpacity=".55" />
      <path d="M0 11Q34 27 68 11" stroke="#a9abad" strokeWidth="1.500" fill="none" />
    </svg>
  );
}

function LensApp() {
  return (
    <Tile className="bg-[#4c8bc9] text-white">
      <Aperture size={54} cut="#4c8bc9" />
    </Tile>
  );
}

type DockApp = { el: React.ReactNode; running?: boolean };

const leftApps: DockApp[] = [
  { el: <Finder />, running: true },
  { el: <Launchpad /> },
  { el: <Safari />, running: true },
  { el: <Messages /> },
  { el: <Mail /> },
  { el: <Maps /> },
  { el: <Photos /> },
  { el: <FaceTime /> },
  { el: <Calendar /> },
  { el: <Contacts /> },
  { el: <Reminders /> },
  { el: <Notes /> },
  { el: <Freeform /> },
  { el: <AppleTv /> },
  { el: <Music /> },
  { el: <Podcasts /> },
  { el: <Keynote /> },
  { el: <Numbers /> },
  { el: <PagesApp /> },
  { el: <AppStore /> },
  { el: <SystemSettings /> },
];

const midApps: DockApp[] = [
  { el: <OpenVpn />, running: true },
  { el: <Chrome />, running: true },
  { el: <Term />, running: true },
  { el: <VsCode />, running: true },
  { el: <Obsidian />, running: true },
  { el: <LensApp />, running: true },
  { el: <Spotify />, running: true },
  { el: <Chat />, running: true },
];

function DockCell({ app }: { app: DockApp }) {
  return (
    <div className="flex w-[102.700px] shrink-0 flex-col items-center">
      <div className="flex h-[110px] items-center justify-center">{app.el}</div>
      {app.running && <span className="size-[8px] rounded-full bg-[#b298cf]" />}
    </div>
  );
}

function Dock() {
  return (
    <div className="relative mt-[4px] ml-[84px] flex h-[124px] w-[3288px] rounded-[38px] border-2 border-[#463a55] bg-linear-to-r from-[#1a1328] via-[#411161] via-69% to-[#1c1232] pl-[4px] shadow-[0_0_110px_10px_rgba(0,0,0,0.26)]">
      <div className="absolute inset-0 rounded-[36px] bg-linear-to-r from-[#1a1328] via-[#1f1338] via-52% to-transparent to-66%" />
      <div className="relative flex">
        {leftApps.map((a, i) => (
          <DockCell key={i} app={a} />
        ))}
        <span className="mt-[14px] mr-[19px] ml-[24px] h-[92px] w-[2px] bg-[#75598f]" />
        {midApps.map((a, i) => (
          <DockCell key={i} app={a} />
        ))}
        <span className="mt-[14px] mr-[20px] ml-[24px] h-[92px] w-[2px] bg-[#5b4d73]" />
        <div className="flex h-[110px] w-[102px] items-center justify-center pb-[7px]"><Folder /></div>
        <div className="flex h-[110px] w-[102px] items-center justify-center pb-[2px]"><Trash /></div>
      </div>
    </div>
  );
}

export default function App() {
  return (
    <div className="flex h-[2234px] w-[3456px] flex-col overflow-hidden bg-linear-to-r from-[#0a0022] via-[#12003a] via-60% to-[#150038] font-['Roboto',sans-serif]">
      <MenuBar />
      <div className="bg-black pt-[2px]">
        <div className="relative flex h-[2020px] flex-col overflow-hidden rounded-[20px]">
          <TitleBar />
          <div className="flex h-[1898px] overflow-hidden">
            <Hotbar />
            <Sidebar />
            <Main />
          </div>
          <div className="flex h-[42px] items-center bg-[#5390c9] pl-[24px] text-white">
            <MdPerson className="-mt-[2px] size-[32px]" />
          </div>
          <div className="absolute inset-0 rounded-[20px] border-2 border-white/25" />
        </div>
      </div>
      <Dock />
    </div>
  );
}
